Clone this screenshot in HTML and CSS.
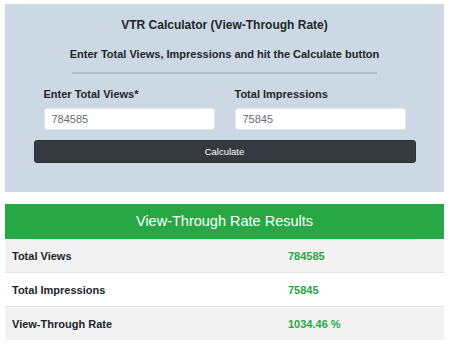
FILE: index.html
```html
<!DOCTYPE html>
<html lang="en">
<head>
    <meta charset="UTF-8">
    <meta name="viewport" content="width=device-width, initial-scale=1.0">
    <title>VTR Calculator</title>
    <link rel="stylesheet" href="styles.css">
</head>
<body>
    <div class="page">
        <section class="calc-panel">
            <h2 class="calc-title">VTR Calculator (View-Through Rate)</h2>
            <p class="calc-subtitle">Enter Total Views, Impressions and hit the Calculate button</p>
            <hr class="divider">

            <form class="calc-form">
                <div class="field">
                    <label for="views">Enter Total Views*</label>
                    <input type="text" id="views" value="784585">
                </div>
                <div class="field">
                    <label for="impressions">Total Impressions</label>
                    <input type="text" id="impressions" value="75845">
                </div>
                <button type="button" class="btn-calc">Calculate</button>
            </form>
        </section>

        <section class="results">
            <div class="results-head">View-Through Rate Results</div>
            <div class="result-row">
                <span class="result-label">Total Views</span>
                <span class="result-value">784585</span>
            </div>
            <div class="result-row">
                <span class="result-label">Total Impressions</span>
                <span class="result-value">75845</span>
            </div>
            <div class="result-row">
                <span class="result-label">View-Through Rate</span>
                <span class="result-value">1034.46 %</span>
            </div>
        </section>
    </div>
</body>
</html>
```

FILE: styles.css
```css
body {
    margin: 0;
    background-color: #ffffff;
    color: #212529;
    font-family: 'Liberation Sans', Arial, sans-serif;
}

.page {
    width: 439px;
    margin: 4px 0 0 5px;
}

.calc-panel {
    background-color: #ccd9e4;
    padding: 13px 0 29px;
    text-align: center;
}

.calc-title {
    margin: 0;
    font-size: 12px;
    line-height: 16px;
    font-weight: bold;
}

.calc-subtitle {
    margin: 14px 0 0;
    font-size: 11px;
    line-height: 14px;
    font-weight: bold;
}

.divider {
    width: 305px;
    margin: 11px auto 0;
    border: none;
    border-top: 2px solid #b3c0cc;
}

.calc-form {
    width: 382px;
    margin: 13px auto 0;
    display: grid;
    grid-template-columns: 1fr 1fr;
    row-gap: 10px;
    text-align: left;
}

.field {
    display: flex;
    flex-direction: column;
    padding: 0 10px;
}

.field label {
    font-size: 11px;
    font-weight: bold;
    line-height: 14px;
    margin-bottom: 7px;
}

.field input {
    height: 22px;
    box-sizing: border-box;
    border: 1px solid #e3e8ec;
    border-radius: 3px;
    padding: 0 7px;
    font-family: inherit;
    font-size: 11px;
    color: #666d73;
    background-color: #ffffff;
}

.btn-calc {
    grid-column: 1 / 3;
    height: 23px;
    border: 1px solid #2c3136;
    border-radius: 3px;
    background-color: #343a40;
    color: #ffffff;
    font-family: inherit;
    font-size: 9.5px;
    cursor: pointer;
}

.results {
    margin-top: 12px;
}

.results-head {
    background-color: #28a745;
    color: #ffffff;
    text-align: center;
    font-size: 14.5px;
    line-height: 35px;
}

.result-row {
    display: grid;
    grid-template-columns: 276px 1fr;
    height: 33px;
    align-items: center;
    padding: 0 7px;
    font-size: 11px;
    font-weight: bold;
    background-color: #f2f2f2;
    border-top: 1px solid #e4e4e4;
}

.result-row:nth-child(2) {
    border-top: none;
}

.result-row:nth-child(odd) {
    background-color: #ffffff;
}

.result-value {
    color: #28a745;
}
```
